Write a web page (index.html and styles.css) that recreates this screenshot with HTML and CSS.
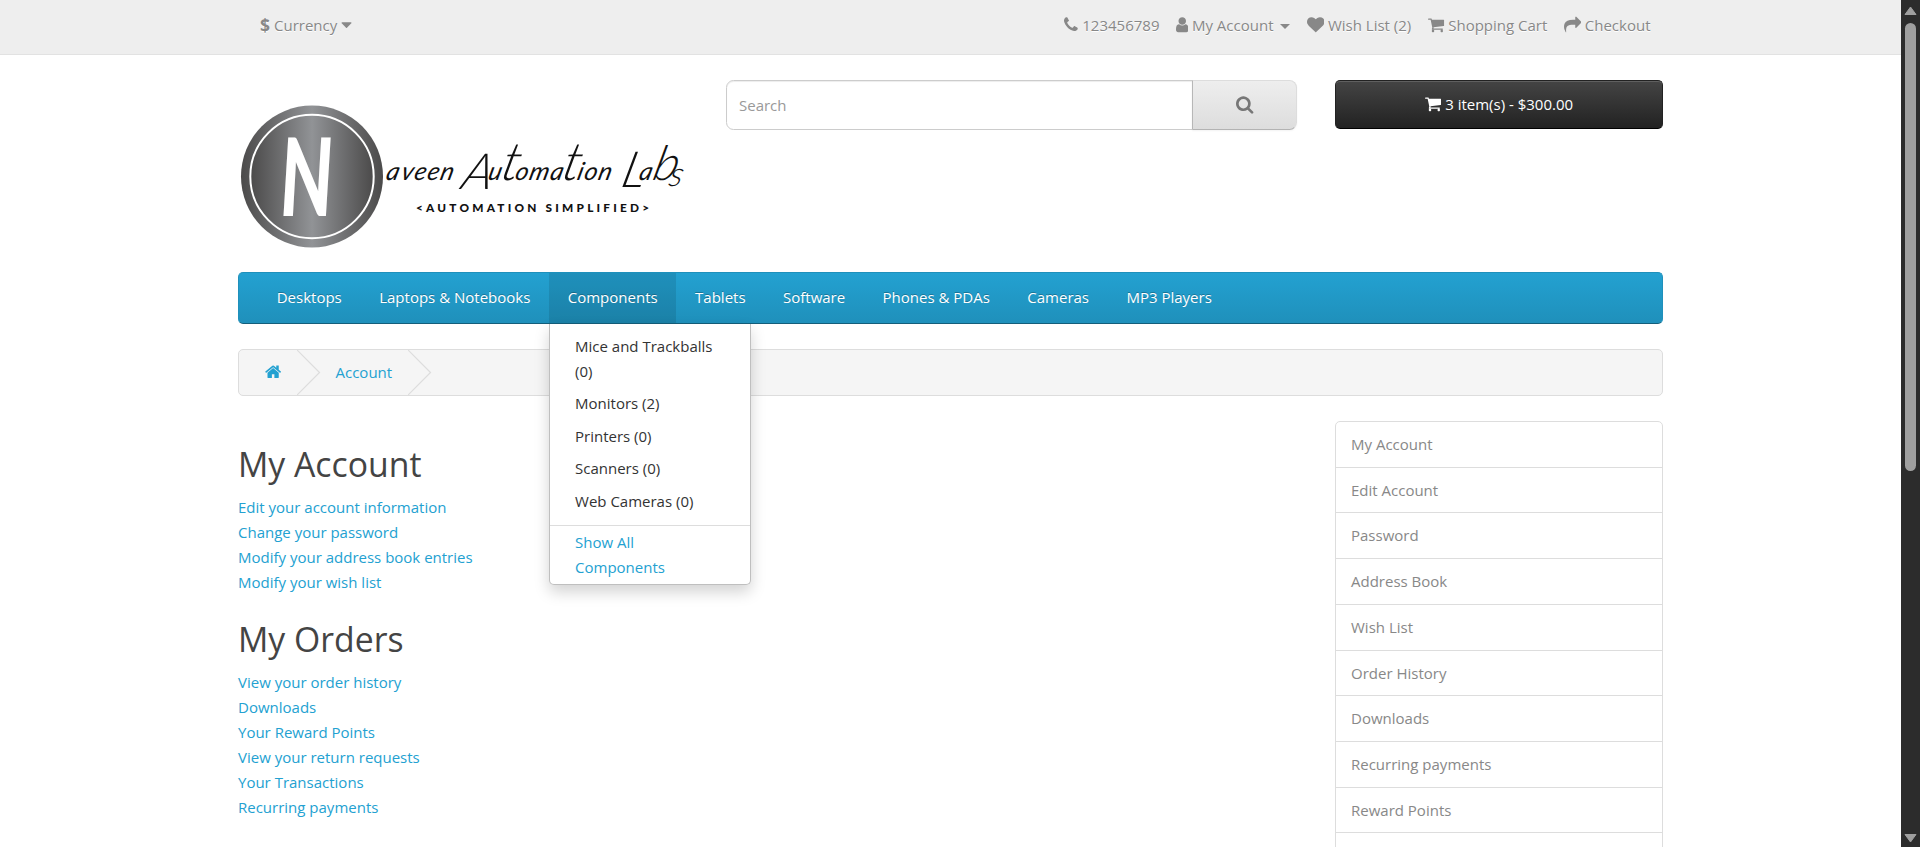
FILE: index.html
```
<!DOCTYPE html>
<html lang="en">
<head>
<meta charset="utf-8">
<title>My Account</title>
<link rel="stylesheet" href="styles.css">
</head>
<body>
<svg class="defs" aria-hidden="true">
  <symbol id="cart" viewBox="64 0 1664 1792"><path d="M704 1536q0 52-38 90t-90 38-90-38-38-90 38-90 90-38 90 38 38 90zm896 0q0 52-38 90t-90 38-90-38-38-90 38-90 90-38 90 38 38 90zm128-1088v512q0 24-16.500 42.500t-40.500 21.500l-1044 122q13 60 13 70 0 16-24 64h920q26 0 45 19t19 45-19 45-45 19h-1024q-26 0-45-19t-19-45q0-11 8-31.500t16-36 21.500-40 15.500-29.500l-177-823h-204q-26 0-45-19t-19-45 19-45 45-19h256q16 0 28.500 6.500t19.500 15.500 13 24.500 8 26 5.500 29.500 4.500 26h1201q26 0 45 19t19 45z"/></symbol>
</svg>
<div class="window">
  <div class="page">
    <nav class="top">
      <div class="container top-row">
        <button class="currency"><strong>$</strong> <span>Currency</span> <svg class="fa caret-fa" viewBox="384 0 1024 1792"><path d="M1408 704q0 26-19 45l-448 448q-19 19-45 19t-45-19l-448-448q-19-19-19-45t19-45 45-19h896q26 0 45 19t19 45z"/></svg></button>
        <ul class="top-links">
          <li><svg class="fa w1408" viewBox="192 0 1408 1792"><path d="M1600 1240q0 27-10 70.500t-21 68.500q-21 50-122 106-94 51-186 51-27 0-53-3.500t-57.500-12.500-47-14.500-55.500-20.500-49-18q-98-35-175-83-127-79-264-216t-216-264q-48-77-83-175-3-9-18-49t-20.500-55.500-14.500-47-12.500-57.500-3.500-53q0-92 51-186 56-101 106-122 25-11 68.500-21t70.500-10q14 0 21 3 18 6 53 76 11 19 30 54t35 63.500 31 53.500q3 4 17.500 25t21.500 35.500 7 28.500q0 20-28.500 50t-62 55-62 53-28.500 46q0 9 5 22.500t8.500 20.500 14 24 11.500 19q76 137 174 235t235 174q2 1 19 11.500t24 14 20.500 8.500 22.500 5q18 0 46-28.500t53-62 55-62 50-28.500q14 0 28.500 7t35.500 21.500 25 17.500q25 15 53.500 31t63.500 35 54 30q70 35 76 53 3 7 3 21z"/></svg><span class="wide">123456789</span></li>
          <li><svg class="fa w1280" viewBox="256 0 1280 1792"><path d="M1536 1399q0 109-62.500 187t-150.500 78h-854q-88 0-150.500-78t-62.500-187q0-85 8.500-160.500t31.500-152 58.500-131 94-89 134.500-34.500q131 128 313 128t313-128q76 0 134.500 34.500t94 89 58.500 131 31.500 152 8.500 160.500zm-256-887q0 159-112.500 271.500t-271.500 112.500-271.500-112.500-112.500-271.500 112.500-271.500 271.500-112.500 271.500 112.500 112.500 271.500z"/></svg><span>My Account</span><b class="caret"></b></li>
          <li><svg class="fa w1792" viewBox="0 0 1792 1792"><path d="M896 1664q-26 0-44-18l-624-602q-10-8-27.500-26t-55.500-65.500-68-97.500-53.500-121-23.500-138q0-220 127-344t351-124q62 0 126.500 21.500t120 58 95.500 68.500 76 68q36-36 76-68t95.500-68.500 120-58 126.500-21.500q224 0 351 124t127 344q0 221-229 450l-623 600q-18 18-44 18z"/></svg><span>Wish List (2)</span></li>
          <li class="top-cart"><svg class="fa w1664"><use href="#cart"/></svg><span>Shopping Cart</span></li>
          <li><svg class="fa w1792" viewBox="0 0 1792 1792"><path d="M1792 640q0 26-19 45l-512 512q-19 19-45 19t-45-19-19-45v-256h-224q-98 0-175.500 6t-154 21.500-133 42.500-105.500 69.500-80 101-48.500 138.500-17.500 181q0 55 5 123 0 6 2.500 23.500t2.500 26.500q0 15-8.500 25t-23.500 10q-16 0-28-17-7-9-13-22t-13.500-30-10.500-24q-127-285-127-451 0-199 53-333 162-403 875-403h224v-256q0-26 19-45t45-19 45 19l512 512q19 19 19 45z"/></svg><span>Checkout</span></li>
        </ul>
      </div>
    </nav>

    <header class="container header">
      <svg class="logo" viewBox="0 0 457 170" role="img" aria-label="Naveen Automation Labs">
        <defs>
          <linearGradient id="disc"><stop offset="0" stop-color="#4b4a4a"/><stop offset=".5" stop-color="#919396"/><stop offset="1" stop-color="#4b4a4a"/></linearGradient>
        </defs>
        <circle cx="74" cy="96.500" r="71" fill="url(#disc)"/>
        <circle cx="74" cy="96.500" r="61.700" fill="url(#disc)" stroke="#fff" stroke-width="2"/>
        <text class="logo-n" transform="translate(43 136) scale(.7 1.030) skewX(2)">N</text>
        <g class="logo-script" transform="translate(0 100) skewX(-14)">
          <text x="147 162 175 188 201">aveen</text>
          <text><tspan class="cap" x="224" y="9">A</tspan><tspan x="249" y="0">u</tspan><tspan class="tall" x="261">t</tspan><tspan x="276 290 311">oma</tspan><tspan class="tall" x="322">t</tspan><tspan x="338 345 359">ion</tspan></text>
          <text><tspan class="cap" x="383" y="7">L</tspan><tspan x="400" y="0">a</tspan><tspan class="tall b" x="413">b</tspan><tspan class="last" x="431" y="6">s</tspan></text>
        </g>
        <text class="logo-tag" x="178" y="131.500" textLength="233">&lt;AUTOMATION SIMPLIFIED&gt;</text>
      </svg>
      <form class="search">
        <input class="search-input" type="text" placeholder="Search">
        <button class="search-btn" type="button"><svg class="fa search-icon" viewBox="64 0 1664 1792"><path d="M1216 832q0-185-131.500-316.500t-316.500-131.500-316.500 131.500-131.500 316.500 131.500 316.500 316.500 131.500 316.500-131.500 131.500-316.500zm512 832q0 52-38 90t-90 38q-54 0-90-38l-343-342q-179 124-399 124-143 0-273.500-55.500t-225-150-150-225-55.500-273.500 55.500-273.500 150-225 225-150 273.500-55.500 273.500 55.500 225 150 150 225 55.500 273.500q0 220-124 399l343 343q37 37 37 90z"/></svg></button>
      </form>
      <button class="cart-btn"><svg class="fa w1664"><use href="#cart"/></svg><span>3 item(s) - $300.00</span></button>
    </header>

    <div class="container">
      <nav class="menu">
        <a>Desktops</a>
        <a>Laptops &amp; Notebooks</a>
        <div class="open">
          <a>Components</a>
          <div class="dropdown">
            <ul>
              <li>Mice and Trackballs (0)</li>
              <li>Monitors (2)</li>
              <li>Printers (0)</li>
              <li>Scanners (0)</li>
              <li>Web Cameras (0)</li>
            </ul>
            <a class="see-all">Show All Components</a>
          </div>
        </div>
        <a>Tablets</a>
        <a>Software</a>
        <a>Phones &amp; PDAs</a>
        <a>Cameras</a>
        <a>MP3 Players</a>
      </nav>

      <ul class="breadcrumb">
        <li class="crumb-home"><svg class="fa w1664" viewBox="64 0 1664 1792"><path d="M1472 992v480q0 26-19 45t-45 19h-384v-384h-256v384h-384q-26 0-45-19t-19-45v-480q0-1 .5-3t.5-3l575-474 575 474q1 2 1 6zm223-69l-62 74q-8 9-21 11h-3q-13 0-21-7l-692-577-692 577q-12 8-24 7-13-2-21-11l-62-74q-8-10-7-23.500t11-21.500l719-599q32-26 76-26t76 26l244 204v-195q0-14 9-23t23-9h192q14 0 23 9t9 23v408l219 182q10 8 11 21.500t-7 23.500z"/></svg></li>
        <li class="crumb-arrow"><svg viewBox="0 0 24 45"><path d="M0 0L22.500 22.500L0 45"/></svg></li>
        <li class="crumb-account">Account</li>
        <li class="crumb-arrow"><svg viewBox="0 0 24 45"><path d="M0 0L22.500 22.500L0 45"/></svg></li>
      </ul>

      <div class="columns">
        <main class="content">
          <h2>My Account</h2>
          <ul>
            <li><a>Edit your account information</a></li>
            <li><a>Change your password</a></li>
            <li><a>Modify your address book entries</a></li>
            <li><a>Modify your wish list</a></li>
          </ul>
          <h2>My Orders</h2>
          <ul>
            <li><a>View your order history</a></li>
            <li><a>Downloads</a></li>
            <li><a>Your Reward Points</a></li>
            <li><a>View your return requests</a></li>
            <li><a>Your Transactions</a></li>
            <li><a>Recurring payments</a></li>
          </ul>
        </main>
        <aside class="list-group">
          <a>My Account</a>
          <a>Edit Account</a>
          <a>Password</a>
          <a>Address Book</a>
          <a>Wish List</a>
          <a>Order History</a>
          <a>Downloads</a>
          <a>Recurring payments</a>
          <a>Reward Points</a>
          <a></a>
        </aside>
      </div>
    </div>
  </div>
  <div class="scrollbar">
    <svg class="arrow" viewBox="0 0 13 10"><path d="M6.500 1L12 8.500H1z"/></svg>
    <div class="thumb"></div>
    <svg class="arrow" viewBox="0 0 13 10"><path d="M6.500 9L12 1.500H1z"/></svg>
  </div>
</div>
</body>
</html>
```
FILE: styles.css
```
* { box-sizing: border-box; }
body {
  margin: 0;
  overflow: hidden;
  background: #fff;
  color: #666;
  font: 400 15px/25px "Open Sans", sans-serif;
}
ul { list-style: none; margin: 0; padding: 0; }
button { font: inherit; }
.defs { display: none; }
.window { display: flex; height: 847px; overflow: hidden; }
.page { width: 1901px; height: 847px; overflow: hidden; }
.container { width: 1425px; margin: 0 auto; }

.fa { height: 17.5px; fill: currentColor; vertical-align: -2.5px; flex: none; }
.w1792 { width: 17.5px; }
.w1664 { width: 16.25px; }
.w1408 { width: 13.75px; }
.w1280 { width: 12.5px; }

.top { height: 55px; background: #eee; border-bottom: 1px solid #e2e2e2; color: #888; text-shadow: 0 1px 0 #fff; }
.top-row { display: flex; justify-content: space-between; padding: 12px 12.5px 0 22px; }
.currency { display: flex; align-items: center; height: 26px; padding: 0; border: 0; background: none; color: inherit; text-shadow: inherit; }
.currency strong { font-size: 17.5px; margin-right: 4px; }
.caret-fa { width: 11px; margin-left: 4px; }
.top-links { display: flex; gap: 16.4px; }
.top-links li { display: flex; align-items: center; gap: 3.6px; height: 26px; white-space: nowrap; }
.top-links .top-cart { margin-left: .7px; }
.top-links .fa { margin-top: -1px; }
.top-links .wide { margin-left: 1px; }
.caret { margin: 2px 0 0 3.4px; border: 5px solid transparent; border-top-color: #888; border-bottom: 0; }

.header { display: flex; align-items: flex-start; height: 217px; padding-top: 25px; }
.logo { width: 457px; height: 170px; margin-right: 31px; }
.logo-n { font: italic 900 105px Lato, sans-serif; fill: #fff; }
.logo-script { font: italic 400 25px Lato, sans-serif; fill: #111; }
.logo-script .cap { font-size: 50px; font-weight: 300; }
.logo-script .tall { font-size: 53px; font-weight: 300; }
.logo-script .b { font-size: 48px; }
.logo-script .last { font-size: 34px; font-weight: 300; }
.logo-tag { font: 900 11.8px Lato, sans-serif; fill: #111; }
.search { display: flex; width: 571px; height: 50px; }
.search-input {
  width: 467px; height: 50px; padding: 0 12px;
  font: inherit; color: #555;
  border: 1px solid #ccc; border-radius: 7.5px 0 0 7.5px;
  box-shadow: inset 0 1px 1px rgba(0, 0, 0, .075);
}
.search-input::placeholder { color: #999; }
.search-btn {
  width: 105px; margin-left: -1px; padding: 2px 0 0 1px; color: #777;
  border: 1px solid; border-color: #ddd #ddd #b3b3b3 #b7b7b7; border-radius: 0 7.5px 7.5px 0;
  background: linear-gradient(#eee, #ddd);
  box-shadow: 0 1px 2px rgba(0, 0, 0, .05);
}
.search-icon { width: 17.4px; height: 18.75px; }
.cart-btn {
  display: flex; justify-content: center; align-items: center; gap: 4px;
  width: 328px; height: 49px; margin-left: auto; padding: 0; color: #fff;
  border: 1px solid; border-color: #222 #222 #000; border-radius: 5px;
  background: linear-gradient(#444, #222);
  box-shadow: inset 0 1px 0 rgba(255, 255, 255, .15);
}
.cart-btn .fa { margin-top: -2px; }

.menu {
  display: flex; height: 52px; padding-left: 19px; color: #fff;
  border: 1px solid; border-color: #1f90bb #1f90bb #145e7a; border-radius: 5px;
  background: linear-gradient(#23a1d1, #1f90bb);
  text-shadow: 0 -1px 0 rgba(0, 0, 0, .25);
}
.menu a { display: block; padding: 12px 18.73px 0; }
.open { position: relative; height: 50px; background: rgba(0, 0, 0, .1); }
.dropdown {
  position: absolute; z-index: 2; top: 51px; left: 0; width: 202px; height: 261px; padding-top: 6px;
  border: 1px solid #bfbfbf; border-top: 0; border-radius: 0 0 5px 5px;
  background: #fff; color: #333; text-shadow: none;
  box-shadow: 0 7px 15px rgba(0, 0, 0, .175);
}
.dropdown li { padding: 3.75px 25px; }
.menu .see-all { margin-top: 7.25px; padding: 4.25px 25px; border-top: 1px solid #ddd; color: #23a1d1; }

.breadcrumb { display: flex; height: 47px; margin: 25px 0; border: 1px solid #ddd; border-radius: 5px; background: #f5f5f5; color: #23a1d1; }
.crumb-home { width: 58px; padding: 10px 0 0 26px; }
.crumb-arrow { width: 24px; height: 45px; }
.crumb-arrow svg { display: block; width: 24px; height: 45px; fill: none; stroke: #ddd; stroke-width: 1.2; }
.crumb-account { width: 87px; padding: 10px 0 0 14.5px; }

.columns { display: flex; justify-content: space-between; }
.content h2 { margin: 25.4px 0 11.9px; color: #444; font-size: 33.75px; font-weight: 400; line-height: 37px; }
.content a { color: #23a1d1; }
.list-group { width: 328px; border: 1px solid #ddd; border-radius: 5px 5px 0 0; }
.list-group a { display: block; height: 45.73px; padding: 9.95px 15px; border-bottom: 1px solid #ddd; color: #888; }

.scrollbar { display: flex; flex-direction: column; align-items: center; width: 19px; height: 847px; padding: 6px 0 4px; background: #2c2c2c; }
.arrow { width: 13px; height: 10px; fill: #9f9f9f; stroke: #9f9f9f; stroke-linejoin: round; }
.thumb { width: 11px; height: 448px; margin: 7px 0 auto; border-radius: 6px; background: #9f9f9f; }
```
